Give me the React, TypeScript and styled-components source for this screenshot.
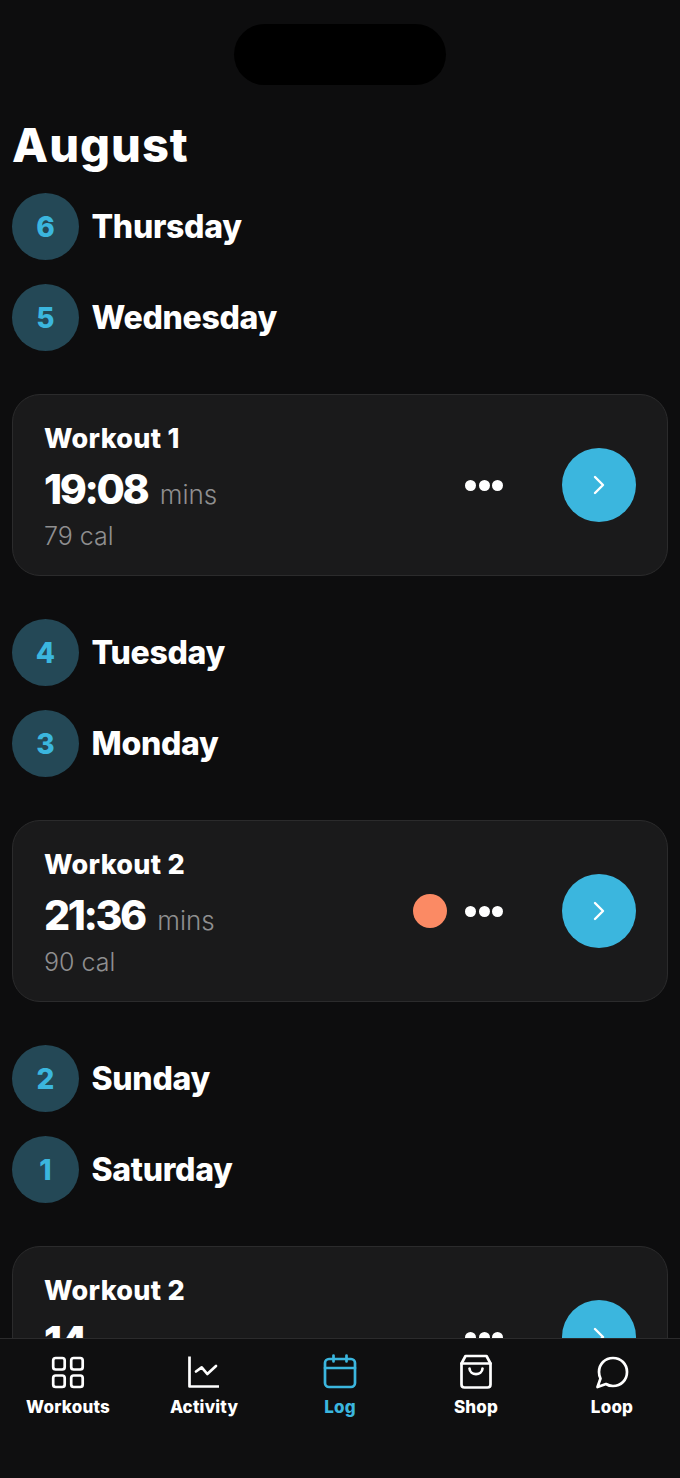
import React from "react";
import styled, { createGlobalStyle } from "styled-components";

const GlobalStyle = createGlobalStyle`
  html, body {
    margin: 0;
    padding: 0;
    background: #0d0d0e;
  }
  * {
    box-sizing: border-box;
  }
`;

const FONT = `"Inter", "Liberation Sans", sans-serif`;

const Page = styled.div`
  position: relative;
  width: 680px;
  height: 1478px;
  display: flex;
  flex-direction: column;
  overflow: hidden;
  background: #0d0d0e;
  font-family: ${FONT};
  color: #fff;
`;

const Notch = styled.div`
  position: absolute;
  top: 24px;
  left: 234px;
  width: 212px;
  height: 61px;
  border-radius: 31px;
  background: #000;
`;

const Content = styled.main`
  flex: 1;
  min-height: 0;
  overflow: hidden;
  padding: 116px 12px 0;
`;

const Title = styled.h1`
  margin: 0 0 19px;
  height: 58px;
  font-size: 47px;
  line-height: 58px;
  font-weight: 800;
  letter-spacing: 1px;
`;

const Days = styled.div`
  display: flex;
  flex-direction: column;
  gap: 24px;
`;

const DayRow = styled.div`
  display: flex;
  align-items: center;
  gap: 12.5px;
`;

const DayBadge = styled.div`
  width: 67px;
  height: 67px;
  border-radius: 50%;
  display: flex;
  align-items: center;
  justify-content: center;
  background: #244856;
  color: #3bb6de;
  font-size: 28px;
  font-weight: 800;
`;

const DayName = styled.div`
  font-size: 32px;
  font-weight: 800;
  letter-spacing: -0.3px;
`;

const Card = styled.section`
  height: 182px;
  margin: 43px 0;
  padding: 0 31px;
  display: flex;
  align-items: center;
  justify-content: space-between;
  background: #1a1a1b;
  border: 1.5px solid #2b2b2c;
  border-radius: 28px;
`;

const CardText = styled.div`
  display: flex;
  flex-direction: column;
  padding-top: 4px;
`;

const CardName = styled.div`
  font-size: 27px;
  line-height: 36px;
  font-weight: 800;
  letter-spacing: 0.3px;
`;

const TimeLine = styled.div`
  display: flex;
  align-items: baseline;
  gap: 12.5px;
  margin-top: 7px;
`;

const Time = styled.span`
  font-size: 41px;
  line-height: 50px;
  font-weight: 800;
  letter-spacing: -2.4px;
`;

const Unit = styled.span`
  font-size: 26px;
  font-weight: 300;
  color: #8f8f90;
`;

const Calories = styled.div`
  margin-top: 5px;
  font-size: 25px;
  line-height: 34px;
  font-weight: 300;
  color: #8f8f90;
`;

const CardActions = styled.div`
  display: flex;
  align-items: center;
`;

const StatusDot = styled.div`
  width: 34px;
  height: 34px;
  margin-right: 18px;
  border-radius: 50%;
  background: #fb8a64;
`;

const Dots = styled.div`
  display: flex;
  gap: 2.5px;
  margin-right: 59px;
`;

const Dot = styled.span`
  width: 11px;
  height: 11px;
  border-radius: 50%;
  background: #fff;
`;

const GoButton = styled.button`
  width: 74px;
  height: 74px;
  padding: 0;
  border: 0;
  border-radius: 50%;
  display: flex;
  align-items: center;
  justify-content: center;
  background: #3bb6de;
  color: #fff;
`;

const Nav = styled.nav`
  flex: none;
  height: 140px;
  padding-top: 14.5px;
  display: grid;
  grid-template-columns: repeat(5, 1fr);
  align-items: start;
  background: #0f0f10;
  border-top: 1.5px solid #2b2b2c;
`;

const NavItem = styled.a<{ $active?: boolean }>`
  display: flex;
  flex-direction: column;
  align-items: center;
  gap: 6px;
  color: ${(p) => (p.$active ? "#3bb6de" : "#fff")};
  font-size: 17px;
  line-height: 22px;
  font-weight: 800;
  letter-spacing: 0.2px;
`;

const Icon = styled.svg`
  display: block;
  width: 36px;
  height: 36px;
  fill: none;
  stroke: currentColor;
  stroke-width: 2.7;
  stroke-linecap: round;
  stroke-linejoin: round;
`;

const WorkoutsIcon = () => (
  <Icon viewBox="0 0 36 36">
    <rect x="3.2" y="4" width="11.5" height="11.5" rx="2.5" />
    <rect x="21.2" y="4" width="11.5" height="11.5" rx="2.5" />
    <rect x="3.2" y="21.5" width="11.5" height="11.5" rx="2.5" />
    <rect x="21.2" y="21.5" width="11.5" height="11.5" rx="2.5" />
  </Icon>
);

const ActivityIcon = () => (
  <Icon viewBox="0 0 36 36">
    <path d="M3.5 2.5V32.5H33" strokeLinecap="butt" />
    <path d="M10 17.5L15.7 13.3L21.3 20L30 12" />
  </Icon>
);

const LogIcon = () => (
  <Icon viewBox="0 0 36 36">
    <rect x="3" y="5" width="30" height="28" rx="4" />
    <path d="M3 14H33M11.5 1.5V7.5M24.5 1.5V7.5" />
  </Icon>
);

const ShopIcon = () => (
  <Icon viewBox="0 0 36 36">
    <path d="M3.5 9.5L7.5 2H28.5L32.5 9.5V30.5C32.5 32.3 31.3 33.5 29.5 33.5H6.5C4.7 33.5 3.5 32.3 3.5 30.5V9.5Z" />
    <path d="M3.5 9.5H32.5M11.5 14.5C12 22 24 22 24.5 14.5" />
  </Icon>
);

const LoopIcon = () => (
  <Icon viewBox="0 0 36 36">
    <path d="M19 4C27 4 33 10 33 18C33 26 27 32 19 32C16.5 32 14 31.3 12 30L3.5 33L6.5 24.5C5.5 22.5 5 20.5 5 18C5 10 11 4 19 4Z" />
  </Icon>
);

const ChevronIcon = () => (
  <svg width="14" height="20" viewBox="0 0 14 20" fill="none" stroke="currentColor" strokeWidth="2.4" strokeLinecap="round" strokeLinejoin="round">
    <path d="M3 2L11 10L3 18" />
  </svg>
);

interface IWorkout {
  name: string;
  time: string;
  calories: string;
  flagged?: boolean;
}

interface IDayGroup {
  days: { day: number; name: string }[];
  workout: IWorkout;
}

const groups: IDayGroup[] = [
  {
    days: [
      { day: 6, name: "Thursday" },
      { day: 5, name: "Wednesday" },
    ],
    workout: { name: "Workout 1", time: "19:08", calories: "79 cal" },
  },
  {
    days: [
      { day: 4, name: "Tuesday" },
      { day: 3, name: "Monday" },
    ],
    workout: { name: "Workout 2", time: "21:36", calories: "90 cal", flagged: true },
  },
  {
    days: [
      { day: 2, name: "Sunday" },
      { day: 1, name: "Saturday" },
    ],
    workout: { name: "Workout 2", time: "14", calories: "" },
  },
];

const navItems = [
  { label: "Workouts", icon: <WorkoutsIcon /> },
  { label: "Activity", icon: <ActivityIcon /> },
  { label: "Log", icon: <LogIcon />, active: true },
  { label: "Shop", icon: <ShopIcon /> },
  { label: "Loop", icon: <LoopIcon /> },
];

const App = () => {
  return (
    <Page>
      <GlobalStyle />
      <Content>
        <Title>August</Title>
        {groups.map((group, index) => (
          <React.Fragment key={index}>
            <Days>
              {group.days.map((d) => (
                <DayRow key={d.day}>
                  <DayBadge>{d.day}</DayBadge>
                  <DayName>{d.name}</DayName>
                </DayRow>
              ))}
            </Days>
            <Card>
              <CardText>
                <CardName>{group.workout.name}</CardName>
                <TimeLine>
                  <Time>{group.workout.time}</Time>
                  {group.workout.calories && <Unit>mins</Unit>}
                </TimeLine>
                <Calories>{group.workout.calories || "\u00a0"}</Calories>
              </CardText>
              <CardActions>
                {group.workout.flagged && <StatusDot />}
                <Dots>
                  <Dot />
                  <Dot />
                  <Dot />
                </Dots>
                <GoButton>
                  <ChevronIcon />
                </GoButton>
              </CardActions>
            </Card>
          </React.Fragment>
        ))}
      </Content>
      <Nav>
        {navItems.map((item) => (
          <NavItem key={item.label} $active={item.active}>
            {item.icon}
            {item.label}
          </NavItem>
        ))}
      </Nav>
      <Notch />
    </Page>
  );
};

export default App;
